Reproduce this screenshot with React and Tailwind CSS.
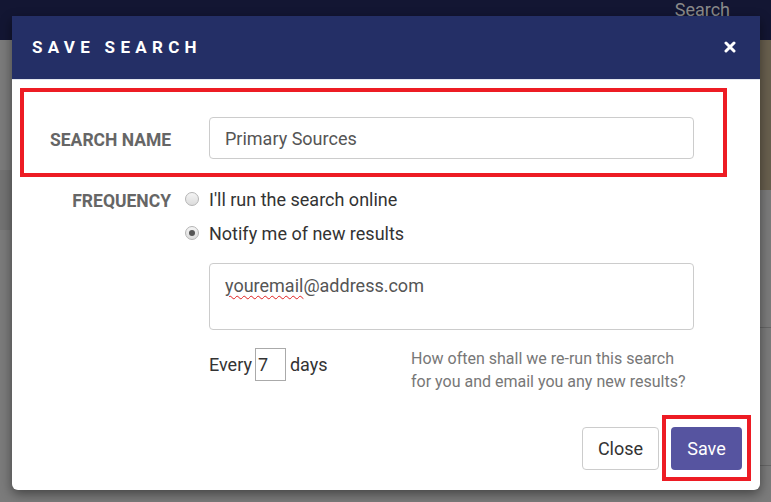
export default function App() {
  return (
    <div className="relative h-[502px] w-[771px] overflow-hidden bg-[#7b7b7b] font-['Roboto','Liberation_Sans',sans-serif]">
      {/* page behind the dialog */}
      <div className="flex h-[40px] justify-end bg-[#131633] pr-[41px]">
        <span className="-mt-[4px] text-[18px] text-[#8a8a8a]">Search</span>
      </div>
      <div className="flex h-[462px]">
        <div className="flex-1">
          <div className="mt-[130px] h-[60px] bg-[#737373]"></div>
        </div>
        <div className="w-[11px]">
          <div className="h-[150px] bg-[#685f4e]"></div>
          <div className="mt-[137px] h-px bg-[#666]"></div>
          <div className="mt-[137px] h-px bg-[#666]"></div>
        </div>
      </div>

      {/* dialog */}
      <div className="absolute left-[12px] top-[16px] flex h-[474px] w-[748px] flex-col rounded-b-[6px] bg-white shadow-[0_4px_12px_rgba(0,0,0,0.45)]">
        <div className="flex h-[63px] items-center justify-between bg-[#242f66] pl-[20px] pr-[24px]">
          <h2 className="text-[17px] font-bold tracking-[5.3px] text-white">SAVE SEARCH</h2>
          <svg width="12" height="12" viewBox="0 0 12 12" className="mt-[-2px]">
            <path d="M2 2 L10 10 M10 2 L2 10" stroke="white" strokeWidth="3" strokeLinecap="round" />
          </svg>
        </div>
        <div className="h-px bg-[#e3e6ee]"></div>

        <div className="ml-[8px] mt-[8px] flex h-[89px] w-[707px] items-start border-4 border-[#ed1c24] pl-[26px] pt-[25px]">
          <label className="mt-[10px] w-[159px] text-[17.5px] font-bold text-[#666]">SEARCH NAME</label>
          <div className="flex h-[42px] w-[485px] items-center rounded-[4px] border border-[#ccc] px-[15px] text-[18px] text-[#555]">
            Primary Sources
          </div>
        </div>

        <div className="mt-[10px] flex">
          <div className="w-[159px] pt-[1px] text-right text-[17.5px] font-bold text-[#666]">FREQUENCY</div>
          <div className="ml-[14px] flex flex-col">
            <div className="flex h-[24px] items-center">
              <span className="h-[14px] w-[14px] rounded-full border border-[#b5b5b5] bg-gradient-to-b from-[#f4f4f4] to-[#dcdcdc]"></span>
              <span className="ml-[10px] text-[18px] text-[#333]">I'll run the search online</span>
            </div>
            <div className="mt-[10px] flex h-[24px] items-center">
              <span className="flex h-[14px] w-[14px] items-center justify-center rounded-full border border-[#b5b5b5] bg-gradient-to-b from-[#f4f4f4] to-[#dcdcdc]">
                <span className="h-[6px] w-[6px] rounded-full bg-[#555]"></span>
              </span>
              <span className="ml-[10px] text-[18px] text-[#333]">Notify me of new results</span>
            </div>

            <div className="ml-[24px] mt-[18px] h-[67px] w-[485px] rounded-[4px] border border-[#ccc] px-[15px] pt-[8px] text-[18px] text-[#555]">
              <span className="underline decoration-[#e02020] decoration-wavy decoration-1 underline-offset-[3px]">youremail</span>@address.com
            </div>

            <div className="ml-[24px] mt-[18px] flex items-start">
              <div className="flex h-[33px] w-[202px] items-center text-[18px] text-[#333]">
                <span>Every</span>
                <span className="ml-[3px] flex h-[33px] w-[31px] items-center border border-[#aaa] pl-[2px]">7</span>
                <span className="ml-[4px]">days</span>
              </div>
              <p className="-mt-[1px] text-[16px] leading-[23px] text-[#777]">
                How often shall we re-run this search<br />for you and email you any new results?
              </p>
            </div>
          </div>
        </div>

        <div className="mt-auto flex items-center justify-end pb-[9px] pr-[9px]">
          <button className="h-[43px] w-[77px] rounded-[4px] border border-[#ccc] bg-white text-[18px] text-[#333]">Close</button>
          <div className="ml-[3px] flex h-[66px] w-[89px] items-center justify-center border-4 border-[#ed1c24]">
            <button className="h-[43px] w-[71px] rounded-[4px] bg-[#5654a0] text-[18px] text-white">Save</button>
          </div>
        </div>
      </div>
    </div>
  )
}
